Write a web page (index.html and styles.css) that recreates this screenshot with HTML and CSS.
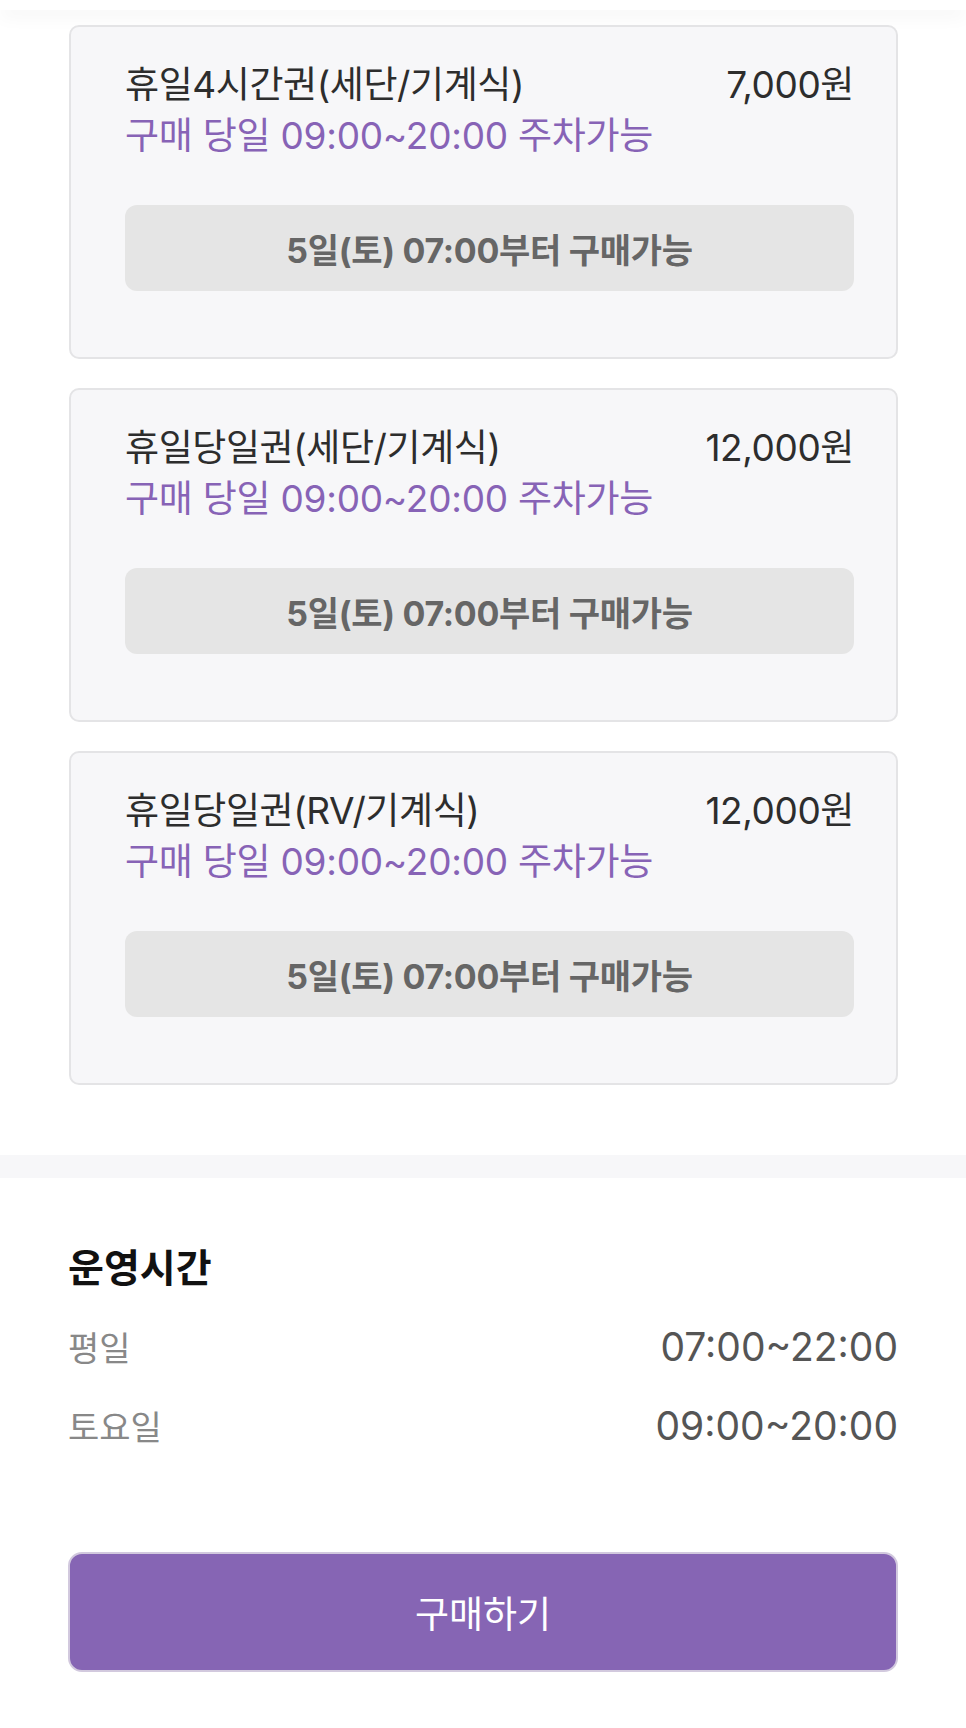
FILE: index.html
```html
<!DOCTYPE html>
<html lang="ko">
<head>
  <meta charset="UTF-8">
  <meta name="viewport" content="width=device-width, initial-scale=1.0">
  <title>주차권 구매</title>
  <link rel="stylesheet" href="styles.css">
</head>
<body>
  <div class="topbar"></div>

  <div class="ticket-list">
    <div class="ticket">
      <div class="ticket-head">
        <span class="ticket-name">휴일4시간권(세단/기계식)</span>
        <span class="ticket-price">7,000원</span>
      </div>
      <p class="ticket-desc">구매 당일 09:00~20:00 주차가능</p>
      <button type="button" class="btn-wait" disabled>5일(토) 07:00부터 구매가능</button>
    </div>

    <div class="ticket">
      <div class="ticket-head">
        <span class="ticket-name">휴일당일권(세단/기계식)</span>
        <span class="ticket-price">12,000원</span>
      </div>
      <p class="ticket-desc">구매 당일 09:00~20:00 주차가능</p>
      <button type="button" class="btn-wait" disabled>5일(토) 07:00부터 구매가능</button>
    </div>

    <div class="ticket">
      <div class="ticket-head">
        <span class="ticket-name">휴일당일권(RV/기계식)</span>
        <span class="ticket-price">12,000원</span>
      </div>
      <p class="ticket-desc">구매 당일 09:00~20:00 주차가능</p>
      <button type="button" class="btn-wait" disabled>5일(토) 07:00부터 구매가능</button>
    </div>
  </div>

  <div class="divider"></div>

  <section class="hours">
    <h2>운영시간</h2>
    <div class="hours-row">
      <span class="hours-label">평일</span>
      <span class="hours-value">07:00~22:00</span>
    </div>
    <div class="hours-row">
      <span class="hours-label">토요일</span>
      <span class="hours-value">09:00~20:00</span>
    </div>

    <button type="button" class="btn-buy">구매하기</button>
  </section>
</body>
</html>
```

FILE: styles.css
```css
body {
  margin: 0;
  font-family: Inter, "Noto Sans CJK KR", sans-serif;
  background: #fff;
  color: #2d2d2d;
}
.topbar {
  height: 10px;
  background: #fff;
  box-shadow: 0 6px 18px rgba(0, 0, 0, 0.05);
}
.ticket-list {
  display: flex;
  flex-direction: column;
  gap: 29px;
  padding: 15px 68px 0 69px;
}
.ticket {
  border: 2px solid #e4e4e6;
  border-radius: 10px;
  background: #f7f7f9;
  padding: 30px 42px 66px 54px;
}
.ticket-head {
  display: flex;
  justify-content: space-between;
  align-items: center;
  height: 50px;
  font-size: 37px;
  color: #2d2d2d;
  letter-spacing: -0.4px;
}
.ticket-desc {
  margin: 4px 0 0;
  line-height: 50px;
  font-size: 37px;
  color: #8763b6;
  letter-spacing: -0.25px;
}
.btn-wait {
  display: block;
  width: 100%;
  height: 86px;
  margin-top: 44px;
  border: none;
  border-radius: 12px;
  background: #e5e5e5;
  color: #666;
  font-family: inherit;
  font-size: 34px;
  font-weight: 700;
  letter-spacing: -0.3px;
}
.divider {
  height: 23px;
  margin-top: 70px;
  background: #f7f7f9;
}
.hours {
  padding: 66px 68px 56px;
}
.hours h2 {
  margin: 0;
  line-height: 48px;
  font-size: 39px;
  font-weight: 700;
  color: #111;
}
.hours-row {
  display: flex;
  justify-content: space-between;
  align-items: center;
  height: 50px;
  margin-top: 29px;
}
.hours-label {
  font-size: 34px;
  color: #888;
}
.hours-value {
  font-size: 39px;
  color: #555;
}
.btn-buy {
  display: block;
  width: 100%;
  height: 120px;
  margin-top: 102px;
  border: 2px solid #d2c9de;
  border-radius: 14px;
  background: #8665b4;
  color: #fff;
  font-family: inherit;
  font-size: 37px;
}
```
